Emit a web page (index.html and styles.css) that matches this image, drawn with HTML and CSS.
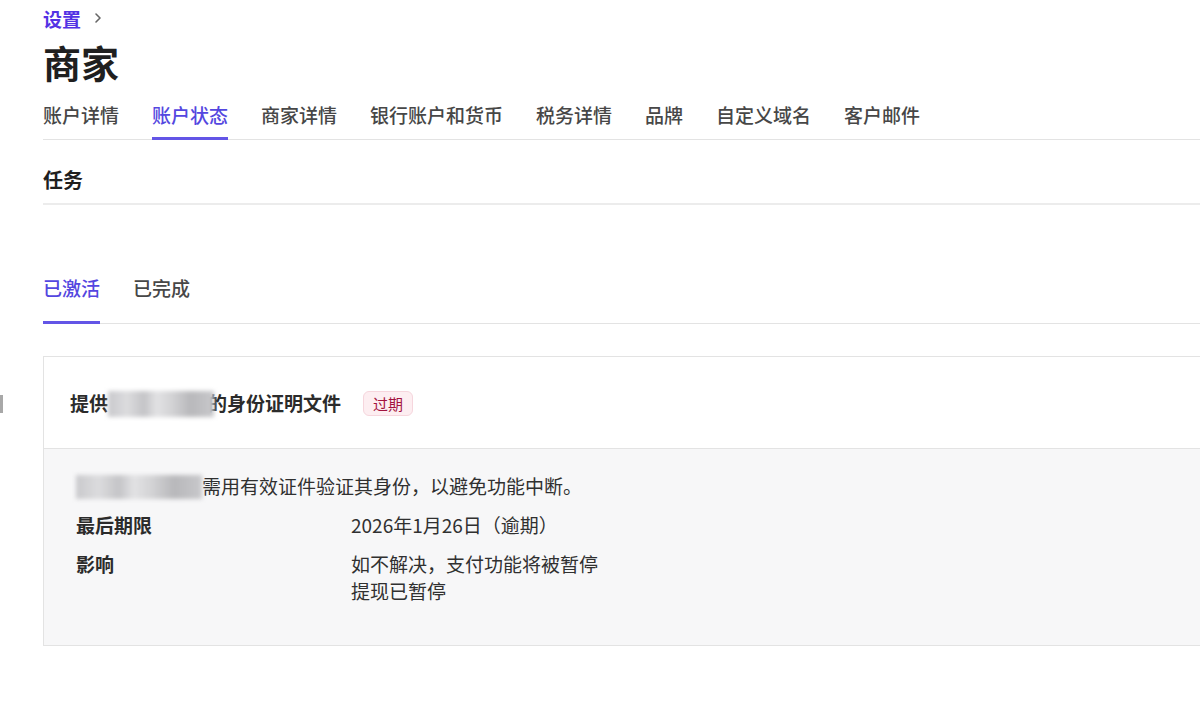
FILE: index.html
```
<!DOCTYPE html>
<html lang="zh-CN">
<head>
    <meta charset="UTF-8">
    <meta name="viewport" content="width=device-width, initial-scale=1">
    <title>商家</title>
    <link rel="stylesheet" href="styles.css">
</head>
<body>
    <span class="edge-mark"></span>
    <section class="page">
        <div class="crumb">
            <a class="crumb-link">设置</a>
            <svg class="crumb-arrow" width="10" height="12" viewBox="0 0 10 12"><path d="M3 2l4 4-4 4" fill="none" stroke="#666" stroke-width="1.6" stroke-linecap="round" stroke-linejoin="round"/></svg>
        </div>
        <h1 class="page-title">商家</h1>

        <nav class="tabs main-tabs">
            <span class="tab">账户详情</span>
            <span class="tab active">账户状态</span>
            <span class="tab">商家详情</span>
            <span class="tab">银行账户和货币</span>
            <span class="tab">税务详情</span>
            <span class="tab">品牌</span>
            <span class="tab">自定义域名</span>
            <span class="tab">客户邮件</span>
        </nav>

        <h2 class="section-title">任务</h2>

        <nav class="tabs sub-tabs">
            <span class="tab active">已激活</span>
            <span class="tab">已完成</span>
        </nav>

        <div class="task-card">
            <div class="task-head">
                <span class="task-name">提供<i class="blur blur-head"></i>的身份证明文件</span>
                <span class="badge">过期</span>
            </div>
            <div class="task-body">
                <p class="task-desc"><i class="blur blur-desc"></i>需用有效证件验证其身份，以避免功能中断。</p>
                <dl class="task-info">
                    <dt>最后期限</dt>
                    <dd>2026年1月26日（逾期）</dd>
                    <dt>影响</dt>
                    <dd>如不解决，支付功能将被暂停<br>提现已暂停</dd>
                </dl>
            </div>
        </div>
    </section>
</body>
</html>
```
FILE: styles.css
```
*{
    margin: 0;
    padding: 0;
    box-sizing: border-box;
}
html{
    font-size: 18px;
    font-family: "Noto Sans CJK SC", "Microsoft YaHei", sans-serif;
    color: #303030;
}
body{
    background: #fff;
    overflow: hidden;
    width: 1200px;
    height: 709px;
}
.edge-mark{
    position: fixed;
    left: 0;
    top: 395px;
    width: 3px;
    height: 18px;
    background: #a8a8a8;
}
.page{
    margin-left: 43px;
    width: 1200px;
    padding-top: 7px;
}

/* breadcrumb */
.crumb{
    display: flex;
    align-items: center;
    gap: 12px;
    height: 24px;
}
.crumb-link{
    color: #5332e4;
    font-size: 19px;
    font-weight: 700;
    line-height: 24px;
}
.crumb-arrow{
    margin-top: -2px;
}
.page-title{
    margin-top: 8px;
    font-size: 38px;
    line-height: 46px;
    font-weight: 700;
    color: #1f1f1f;
}

/* tabs */
.tabs{
    display: flex;
    gap: 33px;
    border-bottom: 1px solid #e3e3e3;
}
.tabs .tab{
    font-size: 19px;
    line-height: 24px;
    font-weight: 500;
    color: #474747;
    border-bottom: 3px solid transparent;
    margin-bottom: -1px;
}
.tabs .tab.active{
    color: #5447e0;
    border-bottom-color: #6355e6;
}
.main-tabs{
    margin-top: 7px;
}
.main-tabs .tab{
    padding: 11px 0 10px;
}
.sub-tabs{
    margin-top: 61px;
}
.sub-tabs .tab{
    padding: 10px 0 21px;
}

.section-title{
    margin-top: 26px;
    padding-bottom: 9px;
    font-size: 20px;
    line-height: 28px;
    font-weight: 700;
    color: #1f1f1f;
    border-bottom: 2px solid #ececec;
}

/* task card */
.task-card{
    margin-top: 32px;
    border: 1px solid #e3e3e3;
}
.task-head{
    display: flex;
    align-items: center;
    gap: 22px;
    padding: 32px 26px 31px;
    background: #fff;
    border-bottom: 1px solid #e3e3e3;
}
.task-name{
    font-size: 19px;
    line-height: 28px;
    font-weight: 700;
    color: #2b2b2b;
}
.badge{
    display: inline-block;
    padding: 0 9px;
    height: 25px;
    line-height: 23px;
    font-size: 15px;
    color: #a3123e;
    background: #fdeef1;
    border: 1px solid #f6d6dd;
    border-radius: 6px;
}
.blur{
    display: inline-block;
    vertical-align: middle;
    filter: blur(2px);
    background: linear-gradient(90deg, #c9c9cc 0, #dcdcde 18%, #c4c4c7 34%, #e2e2e4 46%, #d3d3d5 60%, #b8b8bb 78%, #c8c8cb 100%);
}
.blur-head{
    width: 106px;
    height: 26px;
    margin: -4px -6px 0 0;
}
.blur-desc{
    width: 126px;
    height: 24px;
    margin: -4px 0 0 0;
}
.task-body{
    background: #f7f7f8;
    padding: 23px 33px 41px 32px;
}
.task-desc{
    font-size: 19px;
    line-height: 27px;
    color: #303030;
}
.task-info{
    display: grid;
    grid-template-columns: 275px 1fr;
    row-gap: 12px;
    margin-top: 12px;
    font-size: 19px;
    line-height: 27px;
}
.task-info dt{
    font-weight: 700;
    color: #2b2b2b;
}
.task-info dd{
    color: #303030;
}
```
